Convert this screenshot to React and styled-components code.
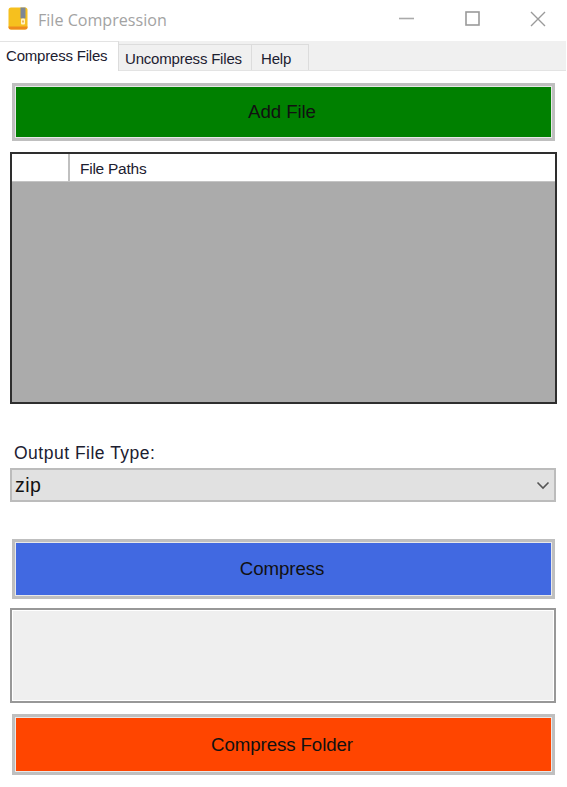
import React from "react";
import styled, { createGlobalStyle } from "styled-components";

const Global = createGlobalStyle`
  html, body { margin: 0; padding: 0; background: #fff; }
  body { font-family: "Liberation Sans", Arial, sans-serif; color: #111; }
`;
const Window = styled.div`
  width: 567px; height: 787px; display: flex; flex-direction: column; overflow: hidden; background: #fff;
`;
const TitleBar = styled.div`
  height: 41px; display: flex; align-items: center; padding: 0 0 4px 8px; box-sizing: border-box;
`;
const AppIcon = styled.svg`width: 20px; height: 23px; flex: none;`;
const Title = styled.div`
  margin: 3px 0 0 10px; font: 16.1px "Open Sans", sans-serif; color: #a3a3a3; flex: 1; white-space: nowrap;
`;
const WinButton = styled.button`
  width: 66px; height: 30px; display: flex; align-items: center; justify-content: center;
  padding: 0; border: 0; background: none;
`;
const WinControls = styled.div`display: flex; margin-right: -4px;`;
const TabStrip = styled.div`
  height: 30px; width: 566px; background: #f0f0f0; border-bottom: 1px solid #e3e3e3; box-sizing: border-box;
  display: flex; align-items: flex-end;
`;
const Tab = styled.div`
  box-sizing: border-box; display: flex; align-items: center; white-space: nowrap;
  letter-spacing: -0.2px; font-size: 15px; color: #1c2030;
  ${p => p.$active ? `
    height: 30px; width: 119px; padding: 0 0 3px 6px; background: #fff; margin-bottom: -1px;
    border-top: 1px solid #e3e3e3; border-right: 1px solid #dcdcdc;
  ` : `
    height: 26px; padding: 2px 0 0 ${p.$pad}px; width: ${p.$w}px; background: #f0f0f0;
    border: 1px solid #dcdcdc; border-bottom: 0; border-left: 0;
  `}
`;
const Body = styled.div`
  display: flex; flex-direction: column; padding: 12px 10px 0; width: 547px;
`;
const ActionButton = styled.button`
  box-sizing: border-box; width: 543px; margin-left: 2px; height: ${p => p.$h}px;
  background: ${p => p.$bg}; border: 3px solid #bfbfbf; outline: 1px solid #e8e8e8; outline-offset: -4px;
  font: 18.7px "Liberation Sans", Arial, sans-serif; letter-spacing: -0.1px; color: #111; padding: 0 3px 0 0;
  margin-top: ${p => p.$mt || 0}px;
`;
const Grid = styled.div`
  box-sizing: border-box; margin-top: 11px; height: 252px; width: 547px;
  border: 2px solid #2e2e2e; background: #ababab;
`;
const GridHead = styled.div`
  height: 27px; background: #fff; display: flex; border-bottom: 1px solid #c4c4c4; box-sizing: content-box;
`;
const RowHeader = styled.div`width: 56px; border-right: 2px solid #c0c0c0;`;
const ColHeader = styled.div`
  padding: 1px 0 0 10px; font-size: 15.5px; line-height: 27px; letter-spacing: -0.25px; color: #1c2030;
`;
const FieldLabel = styled.label`
  margin: 40px 0 0 4px; height: 18px; line-height: 18px; font-size: 17.5px; letter-spacing: 0.5px; color: #1c2030;
`;
const Select = styled.div`
  box-sizing: border-box; margin-top: 6px; height: 34px; width: 546px; background: #e1e1e1;
  border: 2px solid #bcbcbc; display: flex; align-items: center; justify-content: space-between;
  padding: 1px 4px 0 3px; font-size: 19.5px; letter-spacing: 0.4px; color: #111;
`;
const LogBox = styled.div`
  box-sizing: border-box; margin-top: 9px; height: 95px; width: 546px; background: #efefef;
  border: 2px solid #989898; outline: 1px solid #fff; outline-offset: -3px;
`;

export default function App() {
  return (
    <Window>
      <Global />
      <TitleBar>
        <AppIcon viewBox="0 0 20 23">
          <rect x="0.5" y="0.5" width="19" height="22" rx="2.5" fill="#f6c01e" />
          <path d="M0.5 19.5h19v.5a2.5 2.5 0 0 1-2.5 2.5H3A2.5 2.5 0 0 1 .5 20z" fill="#ee8a1d" />
          <rect x="12.5" y="0.5" width="5" height="11" fill="#7d8794" />
          <rect x="13" y="11.5" width="4" height="6" rx="1" fill="#fff3c4" />
          <rect x="14.4" y="13.5" width="1.2" height="2" fill="#d98b1d" />
        </AppIcon>
        <Title>File Compression</Title>
        <WinControls>
          <WinButton aria-label="Minimize">
            <svg width="15" height="3"><path d="M0 1.5h15" stroke="#aaa" strokeWidth="1.6" /></svg>
          </WinButton>
          <WinButton aria-label="Maximize">
            <svg width="15" height="15"><rect x="1" y="1" width="13" height="13" fill="none" stroke="#9a9a9a" strokeWidth="1.6" /></svg>
          </WinButton>
          <WinButton aria-label="Close">
            <svg width="16" height="16"><path d="M1 1l14 14M15 1L1 15" stroke="#9a9a9a" strokeWidth="1.4" /></svg>
          </WinButton>
        </WinControls>
      </TitleBar>
      <TabStrip>
        <Tab $active>Compress Files</Tab>
        <Tab $w={133} $pad={6}>Uncompress Files</Tab>
        <Tab $w={57} $pad={9}>Help</Tab>
      </TabStrip>
      <Body>
        <ActionButton $h={58} $bg="#008000">Add File</ActionButton>
        <Grid>
          <GridHead>
            <RowHeader />
            <ColHeader>File Paths</ColHeader>
          </GridHead>
        </Grid>
        <FieldLabel>Output File Type:</FieldLabel>
        <Select>
          <span>zip</span>
          <svg width="14" height="9" viewBox="0 0 14 9"><path d="M1.5 1.5L7 7l5.5-5.5" fill="none" stroke="#555" strokeWidth="1.6" /></svg>
        </Select>
        <ActionButton $h={60} $mt={37} $bg="#4169e1">Compress</ActionButton>
        <LogBox />
        <ActionButton $h={61} $mt={11} $bg="#ff4500">Compress Folder</ActionButton>
      </Body>
    </Window>
  );
}
